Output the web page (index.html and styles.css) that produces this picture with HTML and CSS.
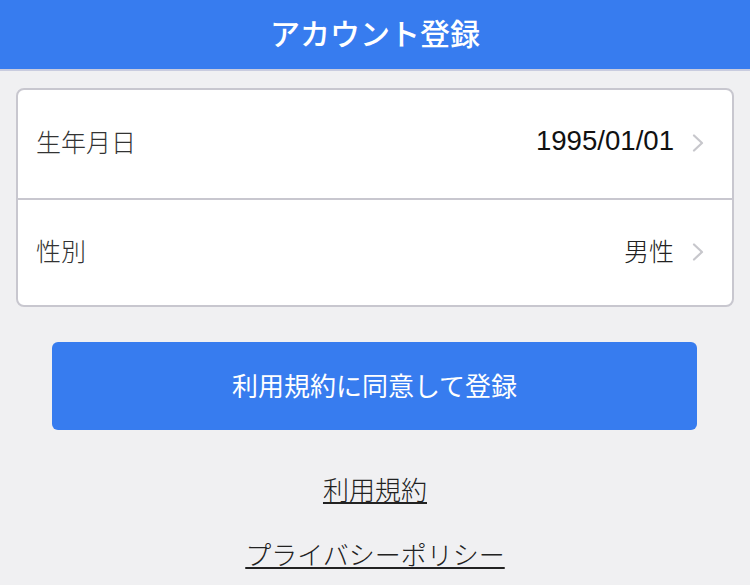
FILE: index.html
```html
<!DOCTYPE html>
<html lang="ja">
<head>
<meta charset="utf-8">
<link rel="stylesheet" href="styles.css">
</head>
<body>
<header class="topbar"><h1 class="title">アカウント登録</h1></header>
<main class="content">
  <section class="card">
    <div class="row">
      <span class="label">生年月日</span>
      <span class="value">1995/01/01</span>
      <svg class="chev" viewBox="0 0 12 18" width="12" height="18"><path d="M2 1.5 L10 9 L2 16.5" fill="none" stroke="#c7c7cc" stroke-width="2.2" stroke-linecap="round" stroke-linejoin="round"/></svg>
    </div>
    <div class="row">
      <span class="label">性別</span>
      <span class="value value-jp">男性</span>
      <svg class="chev" viewBox="0 0 12 18" width="12" height="18"><path d="M2 1.5 L10 9 L2 16.5" fill="none" stroke="#c7c7cc" stroke-width="2.2" stroke-linecap="round" stroke-linejoin="round"/></svg>
    </div>
  </section>
  <button class="submit">利用規約に同意して登録</button>
  <nav class="links">
    <a class="link" href="#">利用規約</a>
    <a class="link" href="#">プライバシーポリシー</a>
  </nav>
</main>
</body>
</html>
```
FILE: styles.css
```css
* { box-sizing: border-box; }
html, body { margin: 0; padding: 0; }
body {
  background: #f0f0f2;
  font-family: "Liberation Sans", "Noto Sans CJK JP", sans-serif;
  width: 750px;
  height: 585px;
  overflow: hidden;
}
.topbar {
  height: 71px;
  background: #377cef;
  border-bottom: 2px solid #c9ccdf;
  display: flex;
  align-items: center;
  justify-content: center;
}
.title {
  margin: 0 0 6px 0;
  color: #fff;
  font-size: 30px;
  font-weight: 500;
  font-family: "Noto Sans CJK JP", sans-serif;
}
.content {
  padding: 17px 16px 0 16px;
  display: flex;
  flex-direction: column;
  align-items: stretch;
}
.card {
  background: #fff;
  border: 2px solid #c8c7cf;
  border-radius: 8px;
}
.row {
  height: 107.5px;
  display: flex;
  align-items: center;
  padding: 0 28px 5px 18px;
}
.row + .row { border-top: 2px solid #c8c7cf; }
.chev { display: block; margin-top: 4px; }
.label {
  flex: 1;
  font-size: 25px;
  color: #333;
  font-family: "Noto Sans CJK JP", sans-serif;
  font-weight: 300;
}
.value {
  font-size: 27.6px;
  color: #111;
  margin-right: 18px;
}
.value-jp {
  font-size: 25px;
  font-family: "Noto Sans CJK JP", sans-serif;
  font-weight: 300;
  color: #222;
}
.submit {
  margin: 35px 37px 0 36px;
  height: 88px;
  border: none;
  border-radius: 6px;
  background: #377cef;
  color: #fff;
  font-size: 26px;
  font-family: "Noto Sans CJK JP", sans-serif;
  font-weight: 400;
  padding: 0 0 4px 0;
}
.links {
  display: flex;
  flex-direction: column;
  align-items: center;
  gap: 26px;
  margin-top: 39px;
}
.link {
  color: #222;
  font-size: 26px;
  font-family: "Noto Sans CJK JP", sans-serif;
  font-weight: 300;
  line-height: 39px;
  text-decoration: underline;
  text-decoration-thickness: 2px;
  text-underline-offset: 2px;
}
```
